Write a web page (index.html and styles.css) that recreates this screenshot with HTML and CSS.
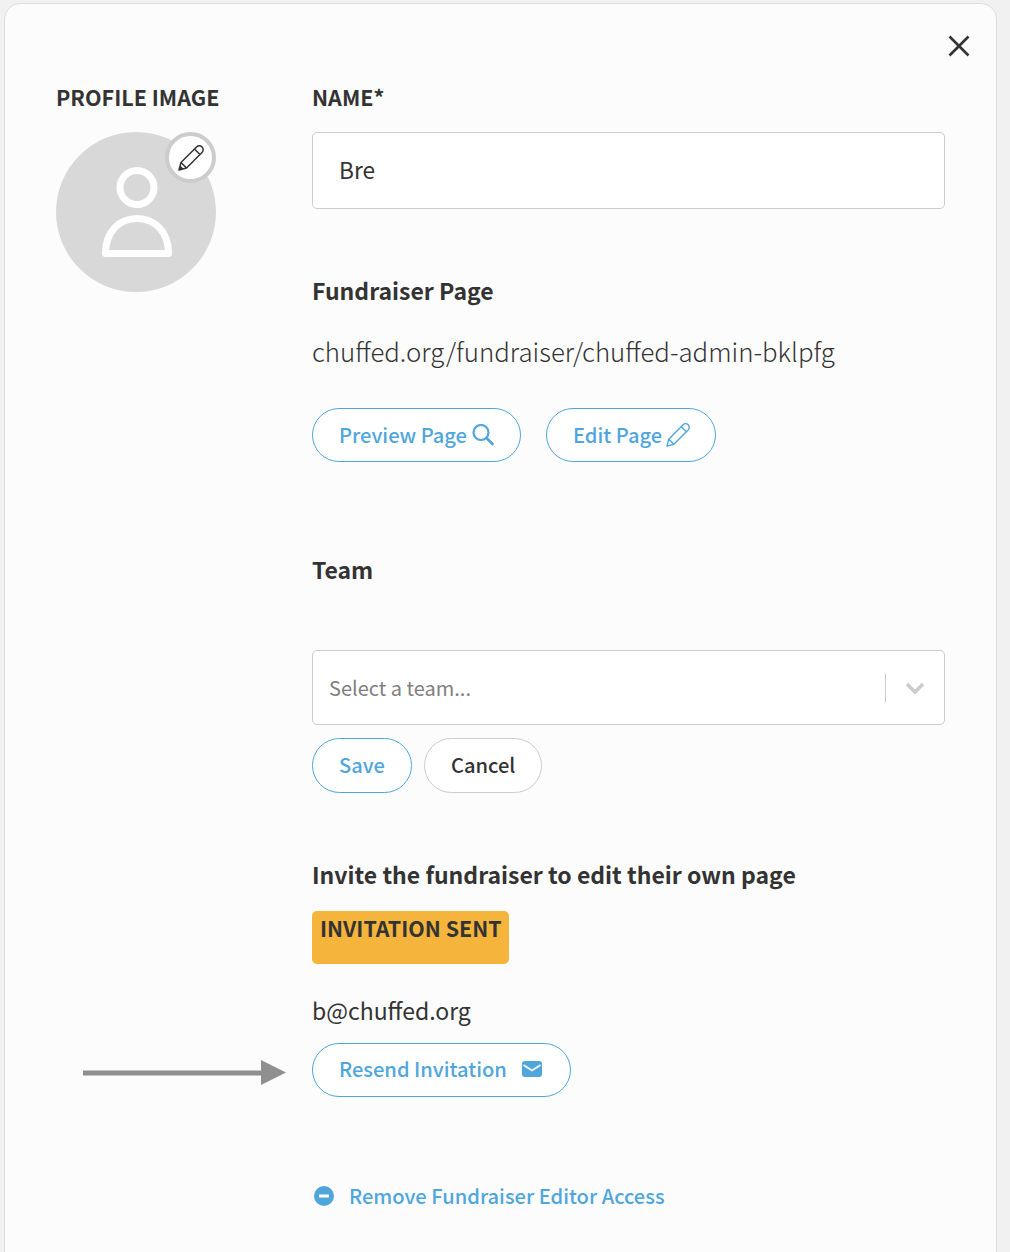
FILE: index.html
```html
<!DOCTYPE html>
<html lang="en">
<head>
<meta charset="utf-8">
<title>Fundraiser</title>
<link rel="stylesheet" href="styles.css">
</head>
<body>
<main class="card">
  <button class="close" aria-label="Close">
    <svg width="22" height="22" viewBox="0 0 22 22"><path d="M1.5 1.5l19 19M20.5 1.5l-19 19" fill="none" stroke="#333" stroke-width="2.6"/></svg>
  </button>
  <section class="left">
    <h2 class="label">PROFILE IMAGE</h2>
    <div class="avatar">
      <svg width="160" height="160" viewBox="0 0 160 160"><circle cx="81" cy="55.5" r="17" fill="none" stroke="#fff" stroke-width="7"/><path d="M49.5 121.5C49.5 100 63 86.5 81 86.5S112.500 100 112.500 121.500Z" fill="none" stroke="#fff" stroke-width="7" stroke-linejoin="round"/></svg>
      <span class="avatar-edit">
        <svg width="26" height="26" viewBox="0 0 26 26"><path d="M1 25L3 17.500 18.500 2a3.700 3.700 0 0 1 5.500 5.500L8.500 23ZM3 17.500L8.500 23M16.500 4L22 9.500" fill="none" stroke="#333" stroke-width="1.500" stroke-linejoin="round"/><path d="M1 25l1.300-4.500 3.200 3.200Z" fill="#333"/></svg>
      </span>
    </div>
  </section>
  <section class="right">
    <h2 class="label">NAME*</h2>
    <div class="input">Bre</div>

    <h3 class="heading fundraiser">Fundraiser Page</h3>
    <p class="url">chuffed.org/fundraiser/chuffed-admin-bklpfg</p>
    <div class="row page-actions">
      <a class="btn preview">Preview Page
        <svg width="22" height="22" viewBox="0 0 22 22"><circle cx="9" cy="8.500" r="7.500" fill="none" stroke="#4fa6dc" stroke-width="2.200"/><path d="M14.500 14l6 6" stroke="#4fa6dc" stroke-width="2.600" stroke-linecap="round"/></svg>
      </a>
      <a class="btn edit">Edit Page
        <svg width="24" height="24" viewBox="0 0 26 26"><path d="M1 25L3 17.500 18.500 2a3.700 3.700 0 0 1 5.500 5.500L8.500 23ZM3 17.500L8.500 23M16.500 4L22 9.500" fill="none" stroke="#4fa6dc" stroke-width="1.500" stroke-linejoin="round"/></svg>
      </a>
    </div>

    <h3 class="heading team">Team</h3>
    <div class="select">
      <span class="placeholder">Select a team...</span>
      <span class="divider"></span>
      <svg class="chevron" width="20" height="12" viewBox="0 0 20 12"><path d="M2 2l8 8 8-8" fill="none" stroke="#ccc" stroke-width="3.600"/></svg>
    </div>
    <div class="row team-actions">
      <a class="btn save">Save</a>
      <a class="btn cancel">Cancel</a>
    </div>

    <h3 class="heading invite">Invite the fundraiser to edit their own page</h3>
    <div class="badge">INVITATION SENT</div>
    <p class="email">b@chuffed.org</p>
    <a class="btn resend">Resend Invitation
      <svg width="20" height="16" viewBox="0 0 20 16"><rect width="20" height="16" rx="3" fill="#4fa6dc"/><path d="M1.500 4l8.500 5.500L18.500 4" fill="none" stroke="#fff" stroke-width="1.800"/></svg>
    </a>
    <a class="remove">
      <svg width="20" height="20" viewBox="0 0 20 20"><circle cx="10" cy="10" r="10" fill="#4fa6dc"/><rect x="5" y="8.500" width="10" height="3" fill="#fff"/></svg>
      Remove Fundraiser Editor Access
    </a>
  </section>
  <svg class="arrow" width="204" height="26" viewBox="0 0 204 26"><path d="M0 10.500H178V0L203 12.500 178 25V15.500H0Z" fill="#8f8f8f"/></svg>
</main>
</body>
</html>
```

FILE: styles.css
```css
* { box-sizing: border-box; }
html, body { height: 100%; }
body {
  margin: 0;
  background: #f1f1f1;
  overflow: hidden;
  color: #333;
  font-family: "Noto Sans CJK JP", "Noto Sans", sans-serif;
}
h2, h3, p { margin: 0; }
.card {
  position: relative;
  display: flex;
  width: 993px;
  min-height: 1300px;
  margin: 3px 0 0 4px;
  padding: 79px 51px 0 51px;
  background: #fcfcfc;
  border: 1px solid #dedede;
  border-radius: 16px;
}
.close {
  position: absolute;
  top: 31px;
  right: 26px;
  padding: 0;
  border: 0;
  background: none;
  line-height: 0;
}
.left { width: 256px; flex: none; }
.right { width: 633px; flex: none; display: flex; flex-direction: column; align-items: flex-start; }
.label { height: 30px; font-size: 21.5px; line-height: 27px; font-weight: 700; }
.heading { height: 30px; font-size: 23px; line-height: 26px; font-weight: 700; }
.avatar {
  position: relative;
  width: 160px;
  height: 160px;
  margin-top: 19px;
  background: #d8d8d8;
  border-radius: 50%;
}
.avatar svg { display: block; }
.avatar-edit {
  position: absolute;
  top: 0;
  right: 0;
  width: 51px;
  height: 51px;
  display: flex;
  align-items: center;
  justify-content: center;
  background: #fff;
  border: 4px solid #ccc;
  border-radius: 50%;
}
.input {
  width: 100%;
  height: 77px;
  margin-top: 19px;
  padding: 0 26px 2px;
  display: flex;
  align-items: center;
  background: #fff;
  border: 1px solid #ccc;
  border-radius: 5px;
  font-size: 22.7px;
}
.fundraiser { margin-top: 68px; }
.url { height: 36px; margin-top: 27px; font-size: 25.8px; line-height: 34px; font-weight: 300; }
.row { display: flex; }
.page-actions { margin-top: 38px; gap: 25px; }
.page-actions .btn { padding-bottom: 1px; }
.btn {
  display: inline-flex;
  align-items: center;
  height: 54px;
  padding: 0 26px 3px 26px;
  background: #fff;
  border: 1px solid #4fa6dc;
  border-radius: 27px;
  color: #4fa6dc;
  font-size: 20.1px;
  font-weight: 500;
  white-space: nowrap;
}
.btn svg { flex: none; }
.preview { gap: 5px; }
.edit { gap: 4px; padding-right: 25px; }
.team { margin-top: 94px; }
.select {
  width: 100%;
  height: 75px;
  margin-top: 64px;
  padding: 0 19px 0 16px;
  display: flex;
  align-items: center;
  background: #fff;
  border: 1px solid #ccc;
  border-radius: 5px;
}
.placeholder { flex: 1; padding-bottom: 1px; font-size: 20px; color: #808080; }
.divider { width: 1px; height: 28px; margin-right: 19px; background: #ccc; }
.chevron { display: block; }
.team-actions { margin-top: 13px; gap: 12px; }
.save, .cancel { height: 55px; border-radius: 28px; }
.cancel { border-color: #ccc; color: #333; }
.invite { margin-top: 68px; }
.badge {
  width: 197px;
  height: 53px;
  margin-top: 20px;
  padding: 2px 8px;
  background: #f5b53c;
  border-radius: 5px;
  font-size: 21.4px;
  line-height: 30px;
  font-weight: 700;
  white-space: nowrap;
}
.email { height: 32px; margin-top: 32px; font-size: 23px; line-height: 29px; }
.resend { margin-top: 15px; gap: 15px; padding-right: 28px; }
.remove {
  margin-top: 85px;
  margin-left: 2px;
  padding-bottom: 3px;
  display: flex;
  align-items: center;
  gap: 15px;
  height: 30px;
  color: #4fa6dc;
  font-size: 20.1px;
  font-weight: 500;
}
.arrow {
  position: absolute;
  left: 78px;
  top: 1056px;
}
```
